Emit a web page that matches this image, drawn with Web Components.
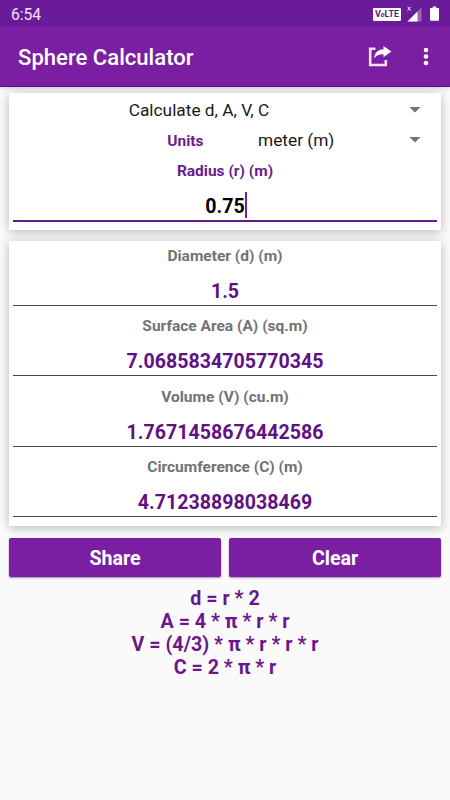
<!DOCTYPE html>
<html lang="en">
<head>
<meta charset="utf-8">
<title>Sphere Calculator</title>
<style>
    body {
        margin: 0;
        height: 800px;
        overflow: hidden;
        background: #fafafa;
        font-family: Roboto, sans-serif;
    }
</style>
</head>
<body>
<sphere-app></sphere-app>

<script>
class StatusBar extends HTMLElement {
    constructor() {
        super();
        this.attachShadow({ mode: 'open' });
        this.shadowRoot.innerHTML = `
            <style>
                :host {
                    display: flex;
                    align-items: center;
                    box-sizing: border-box;
                    height: 26px;
                    padding: 2px 11px 0 11px;
                    background: #6a1b9a;
                    color: #f3e6f8;
                    font-size: 15.6px;
                }
                .time { flex: 1; padding-top: 1px; }
                .volte {
                    width: 28px;
                    height: 13px;
                    margin-right: 6px;
                    border-radius: 1px;
                    background: #fff;
                    color: #57207c;
                    font-size: 9px;
                    line-height: 13.5px;
                    font-weight: 700;
                    text-align: center;
                }
                .volte i { font-size: 7px; }
                svg { display: block; }
            </style>

            <span class="time"><slot></slot></span>
            <span class="volte">V<i>o</i>LTE</span>
            <svg width="15" height="17" viewBox="0 0 15 17">
                <path d="M14.5 1.5V15.5H.5z" fill="#9a68b8"/>
                <path d="M10.5 5.5V15.5H.5z" fill="#fff"/>
                <path d="M.7 .7l3 4M3.7 .7l-3 4" stroke="#f3e6f8" stroke-width="1"/>
            </svg>
            <svg style="margin-left: 8px" width="9" height="16" viewBox="0 0 9 16">
                <path d="M2.7 .6h3.6v1.4h1.9q.8 0 .8.8v11.2q0 .8-.8.8H.8q-.8 0-.8-.8V2.8q0-.8.8-.8h1.9z" fill="#fff"/>
            </svg>
        `;
    }
}

class AppBar extends HTMLElement {
    constructor() {
        super();
        this.attachShadow({ mode: 'open' });
        this.shadowRoot.innerHTML = `
            <style>
                :host {
                    display: flex;
                    align-items: center;
                    box-sizing: border-box;
                    height: 61px;
                    padding: 2px 20px 0 18px;
                    border-bottom: 1px solid #65118a;
                    background: #7b1fa2;
                    color: #fff;
                    box-shadow: 0 1px 4px rgba(0, 0, 0, .2);
                }
                h1 {
                    flex: 1;
                    margin: 0;
                    font-size: 22.1px;
                    font-weight: 500;
                }
                svg { display: block; }
            </style>

            <h1><slot></slot></h1>
            <svg width="24" height="22" viewBox="0 0 24 22">
                <path d="M7.5 2.7H2.2v16.3h15.6v-5" fill="none" stroke="#f6e3fb" stroke-width="2.6"/>
                <path d="M15.5 0L23.3 5.6l-7.8 5.6V8.2C11 8.1 8.4 9.3 6.2 12.4 6.6 6.6 9.9 3.5 15.5 3.3z" fill="#fff"/>
            </svg>
            <svg style="margin-left: 28px" width="10" height="20" viewBox="0 0 10 20" fill="#fff">
                <circle cx="6" cy="3" r="2.3"/>
                <circle cx="6" cy="9.5" r="2.3"/>
                <circle cx="6" cy="16" r="2.3"/>
            </svg>
        `;
    }
}

class CardPanel extends HTMLElement {
    constructor() {
        super();
        this.attachShadow({ mode: 'open' });
        this.shadowRoot.innerHTML = `
            <style>
                :host {
                    display: block;
                    box-sizing: border-box;
                    padding: 0 4px;
                    background: #fff;
                    box-shadow: 0 2px 9px rgba(0, 0, 0, .22), 0 0 12px rgba(0, 0, 0, .06);
                }
            </style>
            <slot></slot>
        `;
    }
}

class SpinnerRow extends HTMLElement {
    constructor() {
        super();
        this.attachShadow({ mode: 'open' });
        this.shadowRoot.innerHTML = `
            <style>
                :host {
                    display: grid;
                    grid-template-columns: 1fr 34px;
                    align-items: center;
                    height: 30px;
                    color: #1a1a1a;
                    font-size: 17.3px;
                }
                .value { padding-right: 18px; text-align: center; }
                :host([label]) { grid-template-columns: 190.5px 1fr 34px; }
                :host([label]) .value { padding-left: 54.5px; text-align: left; }
                .label {
                    display: none;
                    padding-top: 1px;
                    color: #6a1b8f;
                    font-size: 15.5px;
                    font-weight: 700;
                    text-align: right;
                }
                :host([label]) .label { display: block; }
                svg { display: block; margin-left: 6px; }
            </style>

            <span class="label"></span>
            <span class="value"><slot></slot></span>
            <svg width="12" height="6" viewBox="0 0 12 6"><path d="M.5 0h11L6 5.6z" fill="#737373"/></svg>
        `;
        this._labelEl = this.shadowRoot.querySelector('.label');
    }

    connectedCallback() {
        this._labelEl.textContent = this.getAttribute('label') || '';
    }
}

class InputField extends HTMLElement {
    constructor() {
        super();
        this.attachShadow({ mode: 'open' });
        this.shadowRoot.innerHTML = `
            <style>
                :host {
                    display: block;
                    text-align: center;
                    font-weight: 700;
                }
                .label {
                    color: #6a1b8f;
                    font-size: 15.5px;
                    line-height: 32px;
                }
                .entry {
                    display: flex;
                    align-items: center;
                    justify-content: center;
                    box-sizing: border-box;
                    height: 35px;
                    padding: 3px 0 0 2px;
                    border-bottom: 2px solid #641a87;
                    color: #000;
                    font-size: 19.6px;
                }
                .entry slot { display: block; padding-top: 2px; }
                .cursor {
                    width: 2px;
                    height: 26px;
                    background: #6d2390;
                }
            </style>

            <div class="label"></div>
            <div class="entry"><slot></slot><span class="cursor"></span></div>
        `;
        this._labelEl = this.shadowRoot.querySelector('.label');
    }

    connectedCallback() {
        this._labelEl.textContent = this.getAttribute('label');
    }
}

class ResultField extends HTMLElement {
    constructor() {
        super();
        this.attachShadow({ mode: 'open' });
        this.shadowRoot.innerHTML = `
            <style>
                :host {
                    display: block;
                    box-sizing: border-box;
                    height: 70.4px;
                    text-align: center;
                    font-weight: 700;
                }
                .label {
                    height: 30px;
                    color: #727272;
                    font-size: 15.5px;
                    line-height: 31px;
                }
                .value {
                    height: 34px;
                    border-bottom: 1px solid #4a4a4a;
                    color: #5f1284;
                    font-size: 19.6px;
                    line-height: 41px;
                }
            </style>

            <div class="label"></div>
            <div class="value"><slot></slot></div>
        `;
        this._labelEl = this.shadowRoot.querySelector('.label');
    }

    connectedCallback() {
        this._labelEl.textContent = this.getAttribute('label');
    }
}

class ActionButton extends HTMLElement {
    constructor() {
        super();
        this.attachShadow({ mode: 'open' });
        this.shadowRoot.innerHTML = `
            <style>
                :host { display: block; flex: 1; }
                button {
                    display: block;
                    width: 100%;
                    height: 39px;
                    padding: 1px 0 0;
                    border: 0;
                    border-radius: 2px;
                    background: #7b1fa2;
                    box-shadow: 0 1px 2px rgba(60, 0, 90, .45);
                    color: #fff;
                    font: 700 19.6px Roboto, sans-serif;
                }
            </style>
            <button><slot></slot></button>
        `;
    }
}

class FormulaList extends HTMLElement {
    constructor() {
        super();
        this.attachShadow({ mode: 'open' });
        this.shadowRoot.innerHTML = `
            <style>
                :host {
                    display: block;
                    color: #6a178d;
                    font-size: 19.7px;
                    font-weight: 700;
                    line-height: 23px;
                    text-align: center;
                }
                ::slotted(div) { white-space: nowrap; }
            </style>
            <slot></slot>
        `;
    }
}

class SphereApp extends HTMLElement {
    constructor() {
        super();
        this.attachShadow({ mode: 'open' });
        this.shadowRoot.innerHTML = `
            <style>
                :host { display: block; }
                main { padding: 6px 9px 0; }
                .inputs { height: 137px; padding-top: 2px; }
                .results { height: 285px; margin-top: 11px; }
                .actions {
                    display: flex;
                    gap: 8px;
                    margin-top: 12px;
                }
                formula-list { margin-top: 10px; }
            </style>

            <status-bar>6:54</status-bar>
            <app-bar>Sphere Calculator</app-bar>
            <main>
                <card-panel class="inputs">
                    <spinner-row>Calculate d, A, V, C</spinner-row>
                    <spinner-row label="Units">meter (m)</spinner-row>
                    <input-field label="Radius (r) (m)">0.75</input-field>
                </card-panel>
                <card-panel class="results">
                    <result-field label="Diameter (d) (m)">1.5</result-field>
                    <result-field label="Surface Area (A) (sq.m)">7.0685834705770345</result-field>
                    <result-field label="Volume (V) (cu.m)">1.7671458676442586</result-field>
                    <result-field label="Circumference (C) (m)">4.71238898038469</result-field>
                </card-panel>
                <div class="actions">
                    <action-button>Share</action-button>
                    <action-button>Clear</action-button>
                </div>
                <formula-list>
                    <div>d = r * 2</div>
                    <div>A = 4 * π * r * r</div>
                    <div>V = (4/3) * π * r * r * r</div>
                    <div>C = 2 * π * r</div>
                </formula-list>
            </main>
        `;
    }
}

customElements.define('status-bar', StatusBar);
customElements.define('app-bar', AppBar);
customElements.define('card-panel', CardPanel);
customElements.define('spinner-row', SpinnerRow);
customElements.define('input-field', InputField);
customElements.define('result-field', ResultField);
customElements.define('action-button', ActionButton);
customElements.define('formula-list', FormulaList);
customElements.define('sphere-app', SphereApp);
</script>
</body>
</html>
